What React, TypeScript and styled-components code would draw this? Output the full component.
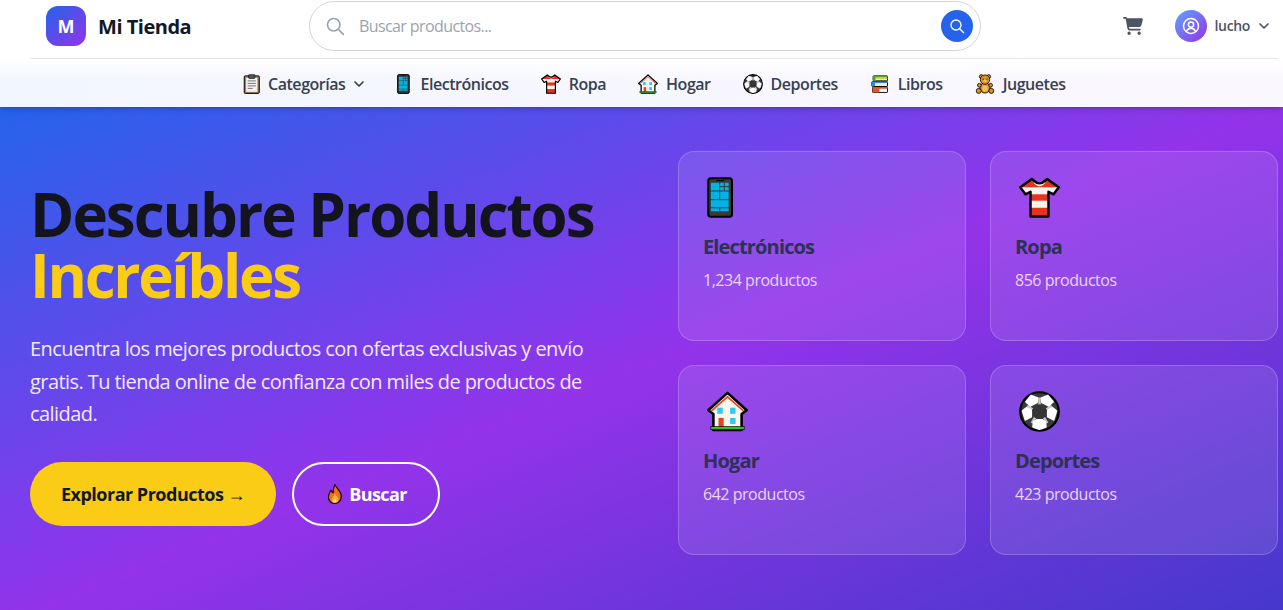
import React from "react";
import styled, { createGlobalStyle } from "styled-components";

const Global = createGlobalStyle`
  html, body { margin: 0; padding: 0; background: #fff; overflow: hidden; }
  body { font-family: "Open Sans", "Noto Sans", sans-serif; }
  * { box-sizing: border-box; }
`;
const Page = styled.div`width: 1283px; height: 610px; overflow: hidden; display: flex; flex-direction: column;`;
const Header = styled.header`height: 107px; flex: none; background: #fff; box-shadow: 0 4px 6px -1px rgba(0,0,0,.14), 0 2px 4px -2px rgba(0,0,0,.12); position: relative; z-index: 2;`;
const TopBar = styled.div`height: 59px; margin: 0 5px 0 30px; padding: 0 8px 7px 16px; border-bottom: 1px solid #e5e7eb; background: #fff; display: flex; align-items: center;`;
const Brand = styled.div`display: flex; align-items: center; gap: 12px; width: 263px; flex: none;`;
const Logo = styled.div`width: 40px; height: 40px; border-radius: 12px; background: linear-gradient(135deg, #2563eb, #9333ea); color: #fff; font-weight: 700; font-size: 18px; display: flex; align-items: center; justify-content: center;`;
const BrandName = styled.span`font-size: 20px; font-weight: 700; color: #111827; letter-spacing: -0.48px; padding-top: 2px;`;
const Search = styled.div`width: 672px; height: 50px; border: 1px solid #d1d5db; border-radius: 25px; background: #fff; display: flex; align-items: center; padding: 0 7px 0 15px; flex: none;`;
const SearchInput = styled.span`flex: 1; margin-left: 14px; color: #9ca3af; font-size: 16px; letter-spacing: -0.6px;`;
const SearchBtn = styled.div`width: 32px; height: 32px; border-radius: 50%; background: #2563eb; display: flex; align-items: center; justify-content: center;`;
const UserArea = styled.div`margin-left: auto; display: flex; align-items: center;`;
const Avatar = styled.div`width: 32px; height: 32px; border-radius: 50%; background: linear-gradient(135deg, #60a5fa, #9333ea); margin-left: 32px; display: flex; align-items: center; justify-content: center;`;
const UserName = styled.span`font-size: 14px; font-weight: 600; color: #4b5563; margin: 0 8px 0 8px; letter-spacing: -0.35px;`;
const Nav = styled.nav`height: 48px; display: flex; align-items: center; justify-content: center; gap: 32px; padding: 1px 5px 0 30px; background: linear-gradient(180deg, #fff 0%, rgba(255,255,255,0) 45%), linear-gradient(90deg, #f2f6fe, #fbf7ff);`;
const NavItem = styled.a`display: flex; align-items: center; gap: 8px; font-size: 16px; font-weight: 600; color: #374151; letter-spacing: -0.46px;`;
const Hero = styled.section`height: 520px; flex: none; padding: 44px 5px 0 30px; background: linear-gradient(to bottom right, #2563eb 0%, #9333ea 50%, #4338ca 100%);`;
const HeroGrid = styled.div`display: grid; grid-template-columns: 600px 600px; column-gap: 48px;`;
const Left = styled.div`padding-top: 33px;`;
const Title = styled.h1`margin: 0 0 27px; font-size: 60px; line-height: 61px; font-weight: 700; color: #14141f; letter-spacing: -2px;`;
const Accent = styled.span`display: block; color: #facc15; letter-spacing: -2.3px;`;
const Lead = styled.p`margin: 0 0 31px; font-size: 20px; line-height: 32.5px; color: #f3e8ff; letter-spacing: -0.57px; width: 590px;`;
const Buttons = styled.div`display: flex; gap: 16px;`;
const Primary = styled.div`height: 64px; width: 246px; border-radius: 32px; background: #facc15; color: #111827; font-weight: 700; font-size: 18px; letter-spacing: -.5px; display: flex; align-items: center; justify-content: center;`;
const Secondary = styled.div`height: 64px; width: 148px; border-radius: 32px; border: 2px solid #fff; color: #fff; font-weight: 700; font-size: 18px; letter-spacing: -.6px; display: flex; align-items: center; justify-content: center; gap: 4px;`;
const Cards = styled.div`display: grid; grid-template-columns: 288px 288px; grid-auto-rows: 190px; gap: 24px;`;
const Card = styled.div`border: 1px solid rgba(255,255,255,.2); border-radius: 16px; background: rgba(255,255,255,.1); padding: 24px;`;
const CardIcon = styled.div`height: 41px; margin: 1px 0 0 4px; display: flex;`;
const CardTitle = styled.h3`margin: 15px 0 7px; font-size: 20px; line-height: 28px; font-weight: 700; color: #2d3154; letter-spacing: -.85px;`;
const CardText = styled.p`margin: 0; font-size: 16px; line-height: 24px; color: #e9d5ff; letter-spacing: -.47px;`;
const EmojiSvg = styled.svg`flex: none;`;

type EP = { size: number };
const Svg: React.FC<EP & { vw?: number; children: React.ReactNode }> = ({ size, vw = 32, children }) => (
  <EmojiSvg width={size * vw / 32} height={size} viewBox={`0 0 ${vw} 32`}>{children}</EmojiSvg>
);
const Phone = ({ size }: EP) => (<Svg size={size} vw={24}>
  <rect x="1" y="1" width="18.500" height="30" rx="2" fill="#3a3a3a" stroke="#000" strokeWidth="1.6"/>
  <path d="M7 2.800H13.500" stroke="#000" strokeWidth=".7"/>
  <g fill="#00b4e6"><rect x="3" y="4.500" width="6.500" height="6"/><rect x="10.300" y="4.500" width="2.800" height="2.600"/><rect x="13.900" y="4.500" width="3" height="2.600"/><rect x="10.300" y="7.900" width="2.800" height="2.600"/><rect x="13.900" y="7.900" width="3" height="2.600"/><rect x="3" y="11.300" width="6.500" height="6"/><rect x="10.300" y="11.300" width="6.600" height="6"/><rect x="3" y="18.100" width="13.900" height="5.500"/><rect x="3" y="24.400" width="6.500" height="2.300"/><rect x="10.300" y="24.400" width="6.600" height="2.300"/></g>
</Svg>);
const ShirtPath = "M10 1.500 L1 8 L5 13.500 L9 11.500 V30.800 H23 V11.500 L27 13.500 L31 8 L22 1.500 L19.500 3.500 C18 5.500 14 5.500 12.500 3.500 Z";
const Shirt = ({ size }: EP) => (<Svg size={size}>
  <clipPath id="shirtClip"><path d={ShirtPath}/></clipPath>
  <path d={ShirtPath} fill="#e8321e"/>
  <g clipPath="url(#shirtClip)" fill="#f7f4ee"><rect x="0" y="8" width="32" height="5.500"/><rect x="0" y="18.500" width="32" height="5.500"/><path d="M12 3 C14 6 18 6 20 3 L20.500 4.500 C18 8 14 8 11.500 4.500Z"/></g>
  <path d={ShirtPath} fill="none" stroke="#000" strokeWidth="1.9" strokeLinejoin="round"/>
</Svg>);
const House = ({ size }: EP) => (<Svg size={size}>
  <path d="M16 1.500 L31 15 L27 18 V30.500 H5 V18 L1 15 Z" fill="#fbf7ee" stroke="#000" strokeWidth="2" strokeLinejoin="round"/>
  <path d="M3.500 15.500 L16 4.500 L28.500 15.500" fill="none" stroke="#e8421e" strokeWidth="1.300"/>
  <g fill="#35c8f5"><rect x="8" y="13" width="4.300" height="4.800"/><rect x="18" y="13" width="4.300" height="4.800"/><rect x="18" y="21" width="4.300" height="4.800"/></g>
  <rect x="9" y="21" width="4" height="8" fill="#e8421e"/>
  <rect x="3" y="27.800" width="26" height="2.400" fill="#2fc22f" stroke="#000" strokeWidth=".5"/>
</Svg>);
const Ball = ({ size }: EP) => (<Svg size={size}>
  <circle cx="16" cy="16" r="15" fill="#3a3a3a" stroke="#000" strokeWidth="1.700"/>
  <path d="M16 10.500L16 5M21.500 14.500L25.500 11.500M19.500 20.800L22 25M12.500 20.800L10 25M10.500 14.500L6.500 11.500" stroke="#c8c8c8" strokeWidth="2"/>
  <g fill="#fff" stroke="#fff" strokeWidth="1.400" strokeLinejoin="round"><path d="M9.500 3.500 L14.500 5.500 L14 9 L9 11.500 L5.500 8.500Z"/><path d="M22.500 3.500 L17.500 5.500 L18 9 L23 11.500 L26.500 8.500Z"/><path d="M2.800 15.500 L6 13 L9.500 15 L9.500 20 L5 22.500Z"/><path d="M29.200 15.500 L26 13 L22.500 15 L22.500 20 L27 22.500Z"/><path d="M11.500 24 L14 22.500 H18 L20.500 24 L21 28 L16 29.800 L11 28Z"/></g>
  <path d="M16 10.500 L21.500 14.500 L19.500 20.800 H12.500 L10.500 14.500Z" fill="#363636"/>
</Svg>);
const Clipboard = ({ size }: EP) => (<Svg size={size} vw={28}>
  <rect x="2" y="3" width="24" height="28" rx="1.500" fill="#a9825a" stroke="#000" strokeWidth="1.600"/>
  <rect x="5" y="6" width="18" height="22.500" fill="#f2f2f2"/>
  <path d="M7.500 11H20.500M7.500 15H20.500M7.500 19H20.500M7.500 23H15.500" stroke="#777" strokeWidth="1.600"/>
  <rect x="9" y="1" width="10" height="6" rx="1" fill="#555" stroke="#000"/>
</Svg>);
const Books = ({ size }: EP) => (<Svg size={size}>
  <rect x="5" y="3" width="23" height="8" rx="1" fill="#f2ead6" stroke="#000" strokeWidth="1.500"/><path d="M5 3H28V5.500H5ZM5 3H9V11H5Z" fill="#4fa82e"/><path d="M9 7H28" stroke="#f2c230" strokeWidth="1.600"/>
  <rect x="3" y="12" width="25" height="8" rx="1" fill="#f2ead6" stroke="#000" strokeWidth="1.500"/><path d="M3 12H28V14.500H3ZM3 12H8V20H3Z" fill="#2f8fdc"/>
  <rect x="4" y="21" width="24" height="8.500" rx="1" fill="#fff" stroke="#000" strokeWidth="1.500"/><path d="M4 21H28V23.500H4ZM4 21H15V29.500H4Z" fill="#e0562a"/>
</Svg>);
const Bear = ({ size }: EP) => (<Svg size={size}>
  <g fill="#dd9424" stroke="#000" strokeWidth="1.300"><circle cx="10" cy="4" r="3"/><circle cx="22" cy="4" r="3"/><ellipse cx="16" cy="22" rx="8" ry="8.500"/><circle cx="6" cy="27" r="4"/><circle cx="26" cy="27" r="4"/><circle cx="7" cy="18" r="3"/><circle cx="25" cy="18" r="3"/><circle cx="16" cy="9" r="7.500"/></g>
  <ellipse cx="16" cy="23" rx="4.500" ry="5" fill="#f0bc5e"/><ellipse cx="16" cy="11" rx="3" ry="2.200" fill="#f0bc5e"/><circle cx="13" cy="8" r="1" fill="#000"/><circle cx="19" cy="8" r="1" fill="#000"/>
</Svg>);
const Fire = ({ size }: EP) => (<Svg size={size}>
  <path d="M16 1 C18 7 26 11 26 20 C26 27 21 31 15.500 31 C9.500 31 5.500 27 5.500 20.500 C5.500 16 8 13 9.500 10 C10.500 12.500 11.500 13.500 13 14 C13 9 13.500 5 16 1Z" fill="#f46a1c" stroke="#000" strokeWidth="1.800"/>
  <path d="M16 15 C18 19 22 21 21.500 25 C21 28.500 18.500 30 15.500 30 C12.500 30 10.500 28 10.500 25 C10.500 22 14 20 16 15Z" fill="#ffb02e"/>
  <path d="M15.700 23 C17 25 18.500 26 18 28 C17.500 29.500 13.500 29.500 13.200 28 C13 26 15 25 15.700 23Z" fill="#fff2a8"/>
</Svg>);

const Chevron = ({ c }: { c: string }) => (
  <svg width="12" height="12" viewBox="0 0 24 24" fill="none" stroke={c} strokeWidth="3.400" strokeLinecap="round" strokeLinejoin="round"><path d="M4 8l8 8 8-8"/></svg>
);
const Mag = ({ s, c, w }: { s: number; c: string; w: number }) => (
  <svg width={s} height={s} viewBox="0 0 24 24" fill="none" stroke={c} strokeWidth={w} strokeLinecap="round"><circle cx="10.500" cy="10.500" r="7.500"/><path d="M16 16l6 6"/></svg>
);

const navs: [React.FC<EP>, string][] = [[Phone, "Electrónicos"], [Shirt, "Ropa"], [House, "Hogar"], [Ball, "Deportes"], [Books, "Libros"], [Bear, "Juguetes"]];
const cards: [React.FC<EP>, string, string][] = [[Phone, "Electrónicos", "1,234 productos"], [Shirt, "Ropa", "856 productos"], [House, "Hogar", "642 productos"], [Ball, "Deportes", "423 productos"]];

export default function App() {
  return (
    <Page>
      <Global />
      <Header>
        <TopBar>
          <Brand><Logo>M</Logo><BrandName>Mi Tienda</BrandName></Brand>
          <Search>
            <Mag s={20} c="#9ca3af" w={2} />
            <SearchInput>Buscar productos...</SearchInput>
            <SearchBtn><Mag s={16} c="#fff" w={2} /></SearchBtn>
          </Search>
          <UserArea>
            <svg width="20" height="18" viewBox="0 0 576 512" fill="#4b5563"><path d="M0 24C0 10.700 10.700 0 24 0H69.500c22 0 41.500 12.800 50.600 32h411c26.300 0 45.500 25 38.600 50.400l-41 152.300c-8.500 31.400-37 53.300-69.500 53.300H170.700l5.400 28.500c2.200 11.300 12.100 19.500 23.600 19.500H488c13.300 0 24 10.700 24 24s-10.700 24-24 24H199.700c-34.600 0-64.300-24.600-70.700-58.500L77.400 54.500c-.7-3.800-4-6.500-7.900-6.500H24C10.700 48 0 37.300 0 24zM128 464a48 48 0 1 1 96 0 48 48 0 1 1-96 0zm336-48a48 48 0 1 1 0 96 48 48 0 1 1 0-96z"/></svg>
            <Avatar>
              <svg width="18" height="18" viewBox="0 0 24 24" fill="none" stroke="#fff" strokeWidth="2"><circle cx="12" cy="12" r="10"/><circle cx="12" cy="10" r="3.500"/><path d="M6 19c1.500-3 3.500-4 6-4s4.500 1 6 4"/></svg>
            </Avatar>
            <UserName>lucho</UserName>
            <Chevron c="#4b5563" />
          </UserArea>
        </TopBar>
        <Nav>
          <NavItem><Clipboard size={20} />Categorías <Chevron c="#374151" /></NavItem>
          {navs.map(([I, t]) => <NavItem key={t}><I size={20} />{t}</NavItem>)}
        </Nav>
      </Header>
      <Hero>
        <HeroGrid>
          <Left>
            <Title>Descubre Productos<Accent>Increíbles</Accent></Title>
            <Lead>Encuentra los mejores productos con ofertas exclusivas y envío gratis. Tu tienda online de confianza con miles de productos de calidad.</Lead>
            <Buttons>
              <Primary>Explorar Productos →</Primary>
              <Secondary><Fire size={20} />Buscar</Secondary>
            </Buttons>
          </Left>
          <Cards>
            {cards.map(([I, t, s]) => (
              <Card key={t}><CardIcon><I size={41} /></CardIcon><CardTitle>{t}</CardTitle><CardText>{s}</CardText></Card>
            ))}
          </Cards>
        </HeroGrid>
      </Hero>
    </Page>
  );
}
